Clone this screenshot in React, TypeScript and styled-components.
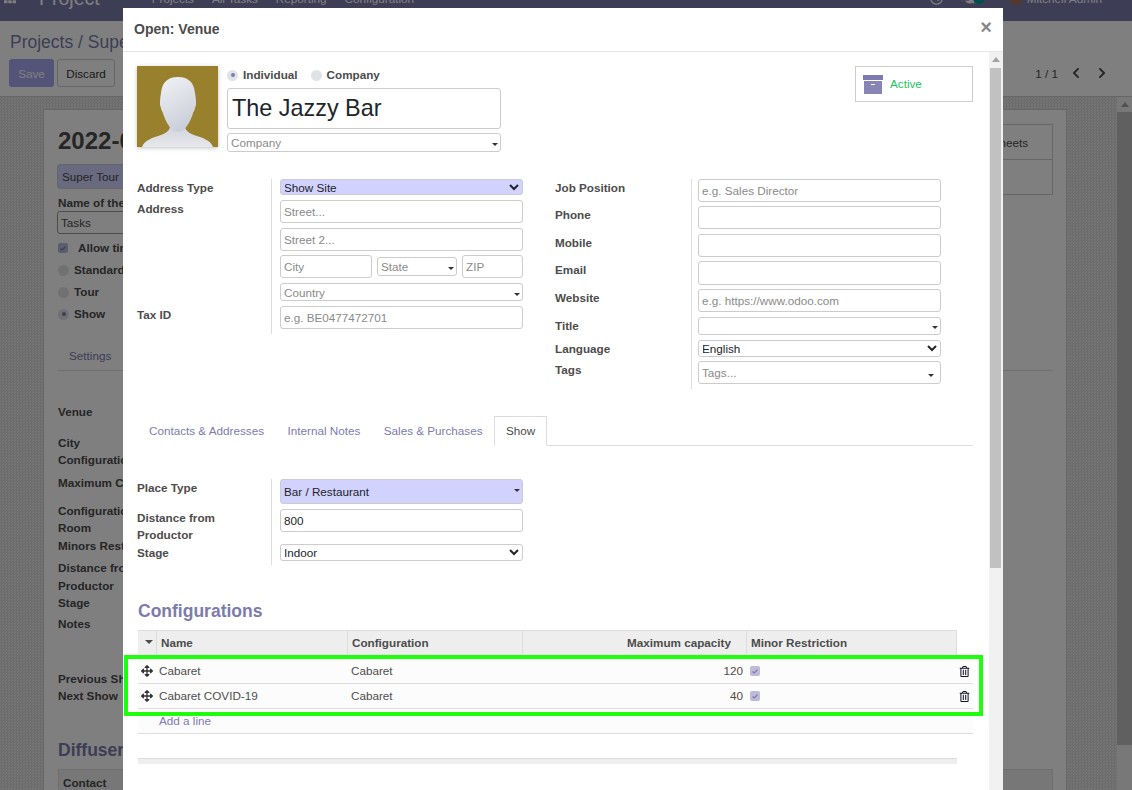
import { ReactElement } from 'react';
import styled, { createGlobalStyle } from 'styled-components';
import { FaArrowsAlt, FaChevronLeft, FaChevronRight, FaComments, FaRegClock, FaRegTrashAlt, FaTh } from 'react-icons/fa';

const GlobalStyle = createGlobalStyle`
  html, body {
    height: 100%;
    margin: 0;
    overflow: hidden;
  }
  body {
    color: #4c4c4c;
    font-family: "Liberation Sans", Arial, sans-serif;
    font-size: 11.7px;
  }
  * {
    box-sizing: border-box;
  }
`;

const Page = styled.div`
  display: flex;
  flex-direction: column;
  height: 790px;
  overflow: hidden;
  position: relative;
  width: 1132px;
`;
const Navbar = styled.div`
  background: #7c7bad;
  flex: none;
  height: 21px;
  overflow: hidden;
`;
const NavInner = styled.div`
  align-items: center;
  color: #fff;
  display: flex;
  height: 46px;
  margin-top: -25px;
  padding: 0 15px 0 4px;
`;
const AppName = styled.span`
  font-size: 19.5px;
  margin: 0 52px 0 23px;
`;
const NavItem = styled.span`
  margin-right: 18px;
`;
const NavRight = styled.div`
  align-items: center;
  display: flex;
  gap: 8px;
  margin-left: auto;
`;
const NavChat = styled(FaComments)`
  margin-left: 10px;
`;
const TealDot = styled.span`
  background: #00a09d;
  border-radius: 50%;
  height: 12px;
  margin: 0 16px 0 -10px;
  width: 12px;
`;
const UserPic = styled.span`
  background: #a5715a;
  border-radius: 50%;
  height: 14px;
  margin-right: -4px;
  width: 14px;
`;
const NavCaret = styled.span`
  border-left: 4px solid transparent;
  border-right: 4px solid transparent;
  border-top: 4px solid #fff;
  margin-left: -1px;
`;

const ControlPanel = styled.div`
  background: #fff;
  border-bottom: 1px solid #ccc;
  flex: none;
  height: 76px;
  padding: 10px 24px 0 9px;
`;
const Breadcrumb = styled.div`
  color: #7c7bad;
  font-size: 17.5px;
  line-height: 22px;
  padding-left: 1px;
`;
const PanelRow = styled.div`
  align-items: center;
  display: flex;
  height: 28px;
  justify-content: space-between;
  margin-top: 6px;
`;
const PanelButtons = styled.div`
  display: flex;
  gap: 3px;
`;
const SaveButton = styled.div`
  align-items: center;
  background: #a8a6f0;
  border-radius: 3px;
  color: #fff;
  display: flex;
  height: 28px;
  justify-content: center;
  width: 45px;
`;
const DiscardButton = styled(SaveButton)`
  background: #fff;
  border: 1px solid #ccc;
  color: #333;
  width: 58px;
`;
const Pager = styled.div`
  align-items: center;
  display: flex;
  gap: 14px;
`;
const PagerCount = styled.span`
  margin-right: -2px;
`;

const MainArea = styled.div`
  display: flex;
  flex: 1;
  min-height: 0;
`;
const SheetBackground = styled.div`
  background-color: #e2e2e2;
  background-image: repeating-conic-gradient(#d9d9d9 0 25%, #e8e8e8 0 50%);
  background-size: 3px 3px;
  flex: 1;
  min-width: 0;
  overflow: hidden;
  padding: 12px 50px 0 43px;
`;
const Sheet = styled.div`
  background: #fff;
  border: 1px solid #ccc;
  height: 760px;
  padding: 0 13px 0 14px;
`;
const SheetTop = styled.div`
  display: flex;
  justify-content: space-between;
`;
const SheetTitle = styled.div`
  color: #4c4c4c;
  font-size: 24px;
  font-weight: 700;
  line-height: 30px;
  margin-top: 16px;
`;
const TourChip = styled.div`
  align-items: center;
  background: #d2d2ff;
  border: 1px solid #ccc;
  border-radius: 3px;
  display: flex;
  height: 25px;
  margin: 8px 0 0 -1px;
  padding-left: 4px;
  width: 180px;
`;
const BgLabel = styled.div<{ $top: number }>`
  font-weight: 700;
  line-height: 14px;
  margin-top: ${(p) => p.$top}px;
`;
const BgInput = styled.div`
  align-items: center;
  border: 1px solid #999;
  border-radius: 3px;
  display: flex;
  height: 23px;
  margin: 1px 0 0 -1px;
  padding-left: 3px;
  width: 180px;
`;
const BgOption = styled(BgLabel)<{ $gap?: number }>`
  align-items: center;
  display: flex;
  gap: ${(p) => p.$gap ?? 5}px;
`;
const StatBoxes = styled.div`
  margin-top: 14px;
  width: 150px;
`;
const StatBox = styled.div`
  align-items: center;
  border: 1px solid #ccc;
  display: flex;
  height: 36px;
  justify-content: flex-end;
  margin-bottom: -1px;
  padding-right: 24px;
`;
const BgTabs = styled.div`
  border-bottom: 1px solid #ddd;
  color: #7c7bad;
  line-height: 14px;
  margin-top: 28px;
  padding: 0 0 7px 11px;
`;
const BgHeading = styled.div`
  color: #7c7bad;
  font-size: 17.5px;
  font-weight: 700;
  line-height: 20px;
  margin-top: 37px;
`;
const BgTableHead = styled.div`
  align-items: center;
  background: #eee;
  border: 1px solid #ddd;
  display: flex;
  font-weight: 700;
  height: 26px;
  margin-top: 9px;
  padding-left: 4px;
`;
const PageScrollbar = styled.div`
  background: #f1f1f1;
  flex: none;
  padding: 15px 0 0;
  position: relative;
  width: 15px;
`;
const PageScrollThumb = styled.div`
  background: #c1c1c1;
  height: 633px;
`;
const ScrollArrow = styled.span`
  border-bottom: 5px solid #a3a3a3;
  border-left: 4px solid transparent;
  border-right: 4px solid transparent;
  height: 0;
  left: 50%;
  margin-left: -4px;
  position: absolute;
  top: 5px;
  width: 0;
`;
const Backdrop = styled.div`
  background: rgba(0, 0, 0, 0.5);
  inset: 0;
  position: absolute;
`;

const Modal = styled.div`
  background: #fff;
  display: flex;
  flex-direction: column;
  height: 782px;
  left: 123px;
  position: absolute;
  top: 8px;
  width: 880px;
`;
const ModalHeader = styled.div`
  align-items: center;
  border-bottom: 1px solid #e5e5e5;
  display: flex;
  flex: none;
  height: 44px;
  justify-content: space-between;
  padding: 0 11px 2px 11px;
`;
const ModalTitle = styled.div`
  color: #4c4c4c;
  font-size: 14px;
  font-weight: 700;
`;
const CloseButton = styled.span`
  color: #888;
  font-size: 20px;
  font-weight: 700;
  line-height: 20px;
  padding-bottom: 4px;
`;
const ModalMain = styled.div`
  display: flex;
  flex: 1;
  min-height: 0;
`;
const ModalBody = styled.div`
  flex: 1;
  min-width: 0;
  overflow: hidden;
  padding: 14px 16px 0 14px;
`;
const ModalScrollbar = styled.div`
  background: #f1f1f1;
  flex: none;
  padding: 16px 2px 0 1px;
  position: relative;
  width: 14px;
`;
const ModalScrollThumb = styled.div`
  background: #c1c1c1;
  height: 500px;
`;

const PartnerTop = styled.div`
  align-items: flex-start;
  display: flex;
  height: 113px;
`;
const Avatar = styled.div`
  box-shadow: 0 1px 4px rgba(0, 0, 0, 0.25);
  flex: none;
  height: 81px;
  width: 81px;
`;
const PartnerMain = styled.div`
  margin-left: 9px;
  width: 274px;
`;
const RadioRow = styled.div`
  align-items: center;
  display: flex;
  height: 18px;
  margin-bottom: 4px;
`;
const Radio = styled.span<{ $checked?: boolean }>`
  align-items: center;
  background: #e0e2e6;
  border-radius: 50%;
  display: flex;
  flex: none;
  height: 11px;
  justify-content: center;
  width: 11px;

  &::after {
    background: #7c7bad;
    border-radius: 50%;
    content: '';
    display: ${(p) => (p.$checked ? 'block' : 'none')};
    height: 4px;
    width: 4px;
  }
`;
const RadioLabel = styled.span`
  font-weight: 700;
  margin: 0 13px 0 5px;
  padding-bottom: 2px;
`;
const TextInput = styled.input<{ $height?: number; $width?: number }>`
  background: #fff;
  border: 1px solid #ccc;
  border-radius: 3px;
  color: #212529;
  display: block;
  font-family: inherit;
  font-size: 11.7px;
  height: ${(p) => p.$height ?? 23}px;
  outline: none;
  padding: 0 3px;
  width: ${(p) => (p.$width ? `${p.$width}px` : '100%')};

  &::placeholder {
    color: #8a8a8a;
    opacity: 1;
  }
`;
const NameInput = styled(TextInput)`
  font-size: 23.4px;
  height: 41px;
  margin-bottom: 4px;
  padding: 0 4px;
`;
const ComboWrap = styled.div<{ $width?: number }>`
  flex: none;
  position: relative;
  width: ${(p) => (p.$width ? `${p.$width}px` : '100%')};
`;
const ComboCaret = styled.span<{ $right?: number; $bottom?: number }>`
  border-left: 3.5px solid transparent;
  border-right: 3.5px solid transparent;
  border-top: 3.5px solid #333;
  bottom: ${(p) => p.$bottom ?? 6}px;
  position: absolute;
  right: ${(p) => p.$right ?? 3}px;
`;
const ActiveButton = styled.div`
  align-items: center;
  border: 1px solid #ccc;
  display: flex;
  gap: 7px;
  height: 36px;
  margin-left: auto;
  padding-left: 7px;
  width: 118px;
`;
const ActiveText = styled.span`
  color: #22c55e;
  padding-bottom: 2px;
`;

const Columns = styled.div`
  align-items: flex-start;
  display: flex;
`;
const FormGrid = styled.div<{ $label: number; $pad: number; $left?: number }>`
  display: grid;
  grid-template-columns: ${(p) => p.$label}px ${(p) => 243 + p.$pad + 1}px;
  margin-left: ${(p) => p.$left ?? 0}px;
`;
const FormLabel = styled.div`
  color: #4c4c4c;
  font-weight: 700;
  line-height: 14px;
  padding-top: 2px;
`;
const WrapLabel = styled(FormLabel)`
  line-height: 17px;
  padding-top: 0;
`;
const FormCell = styled.div<{ $pad: number; $gap: number }>`
  border-left: 1px solid #ddd;
  padding-bottom: ${(p) => p.$gap}px;
  padding-left: ${(p) => p.$pad}px;
`;
const CellRow = styled.div`
  align-items: center;
  display: flex;
  gap: 5px;
  justify-content: space-between;
`;
const Stack = styled.div`
  display: flex;
  flex-direction: column;
`;
const Spaced = styled.div<{ $after: number }>`
  margin-bottom: ${(p) => p.$after}px;
`;
const NativeSelect = styled.select<{ $height: number; $required?: boolean }>`
  background: ${(p) => (p.$required ? '#d2d2ff' : '#fff')};
  border: 1px solid #ccc;
  border-radius: 3px;
  color: #212529;
  display: block;
  font-family: inherit;
  font-size: 11.7px;
  height: ${(p) => p.$height}px;
  outline: none;
  padding: 0;
  text-indent: -1px;
  width: 243px;
`;
const PlaceSelect = styled.div`
  background: #d2d2ff;
  border: 1px solid #ccc;
  border-radius: 3px;
  color: #212529;
  height: 25px;
  line-height: 24px;
  padding-left: 3px;
`;

const Tabs = styled.div`
  border-bottom: 1px solid #ddd;
  display: flex;
  height: 30px;
  margin-top: 27px;
`;
const Tab = styled.div<{ $active?: boolean }>`
  align-items: center;
  background: #fff;
  border: 1px solid ${(p) => (p.$active ? '#ddd' : 'transparent')};
  border-bottom: ${(p) => (p.$active ? '1px solid #fff' : '1px solid transparent')};
  color: ${(p) => (p.$active ? '#4c4c4c' : '#7c7bad')};
  display: flex;
  height: 30px;
  margin-right: -0.5px;
  padding: 0 11px 2px;
`;
const ShowPage = styled.div`
  margin-top: 33px;
`;
const PlaceCell = styled.div`
  align-items: center;
  display: flex;
  gap: 10px;
`;
const Heading = styled.h3`
  color: #7c7bad;
  font-size: 17.5px;
  font-weight: 700;
  line-height: 20px;
  margin: 36px 0 9px 1px;
`;

const ListWrap = styled.div`
  margin-left: 1px;
  width: 835px;
`;
const HeaderRow = styled.div`
  background: #eee;
  border-top: 1px solid #ddd;
  display: grid;
  font-weight: 700;
  grid-template-columns: 19px 191px 175px 224px 1fr;
  height: 29px;
  width: 819px;
`;
const HeaderCell = styled.div<{ $right?: boolean }>`
  align-items: center;
  border-right: 1px solid #ddd;
  display: flex;
  height: 27px;
  justify-content: ${(p) => (p.$right ? 'flex-end' : 'flex-start')};
  padding: 0 ${(p) => (p.$right ? 15 : 4)}px 5px 4px;
`;
const SortCaret = styled.span`
  border-left: 4px solid transparent;
  border-right: 4px solid transparent;
  border-top: 4px solid #4c4c4c;
  margin-left: 3px;
`;
const BodyRow = styled.div`
  align-items: center;
  background: #fcfcfc;
  border-bottom: 1px solid #ddd;
  color: #4c4c4c;
  display: grid;
  grid-template-columns: 19px 191px 175px 224px 1fr 15px;
  height: 25px;
`;
const NameCell = styled.div`
  padding: 0 0 2px 2px;
`;
const ConfigCell = styled.div`
  padding: 0 0 2px 3px;
`;
const NumberCell = styled.div`
  padding: 0 4px 2px 0;
  text-align: right;
`;
const MinorCell = styled.div`
  display: flex;
  padding-left: 3px;
`;
const HandleCell = styled.div`
  color: #333;
  display: flex;
  justify-content: center;
  padding-right: 1px;
`;
const TrashCell = styled.div`
  color: #14142b;
  display: flex;
  padding-left: 1px;
`;
const CheckBox = styled.span`
  align-items: center;
  background: #bdbbd8;
  border-radius: 2px;
  display: flex;
  flex: none;
  height: 10px;
  justify-content: center;
  width: 10px;
`;
const AddLine = styled.div`
  background: #fcfcfc;
  border-bottom: 1px solid #ddd;
  color: #7c7bad;
  height: 25px;
  line-height: 24px;
  padding-left: 21px;
`;
const ListFooter = styled.div`
  background: #eee;
  border-top: 1px solid #ddd;
  height: 6px;
  margin-top: 24px;
  width: 819px;
`;
const Highlight = styled.div`
  border: 4px solid #1eff0e;
  height: 61px;
  left: 124px;
  position: absolute;
  top: 655px;
  width: 859px;
`;

function Combo(props: {
  placeholder?: string;
  height: number;
  width?: number;
  caretRight?: number;
  caretBottom?: number;
}): ReactElement {
  return (
    <ComboWrap $width={ props.width }>
      <TextInput placeholder={ props.placeholder } $height={ props.height } />
      <ComboCaret $right={ props.caretRight } $bottom={ props.caretBottom } />
    </ComboWrap>
  );
}

function AvatarPicture(): ReactElement {
  return (
    <svg width="81" height="81" viewBox="0 0 81 81">
      <defs>
        <linearGradient id="face" x1="0.2" y1="0" x2="0.6" y2="1">
          <stop offset="0" stopColor="#eef0f3" />
          <stop offset="1" stopColor="#c9cdd7" />
        </linearGradient>
        <linearGradient id="body" x1="0" y1="0" x2="0" y2="1">
          <stop offset="0" stopColor="#d2d5dd" />
          <stop offset="1" stopColor="#e6e8ec" />
        </linearGradient>
      </defs>
      <rect width="81" height="81" fill="#98802d" />
      <path d="M5 81C7 75 14 72 24 69C29 67 32 65 33 61L48 61C49 65 52 67 57 69C67 72 74 75 76 81Z" fill="url(#body)" />
      <path d="M41 11C30 11 25 17 24 27C23 32 23 36 23 39C24 41 24 44 26 47C28 54 32 62 37 65C39 66 43 66 45 65C50 62 54 54 56 47C58 44 58 41 59 39C59 36 59 32 58 27C57 17 52 11 41 11Z" fill="url(#face)" />
    </svg>
  );
}

function ArchiveIcon(): ReactElement {
  return (
    <svg width="20" height="19" viewBox="0 0 20 19">
      <rect x="0" y="0" width="20" height="5" fill="#7c7bad" />
      <rect x="1" y="6" width="18" height="13" fill="#8785b5" />
      <rect x="8" y="9" width="4" height="1" fill="#fff" />
    </svg>
  );
}

function ExternalIcon(): ReactElement {
  return (
    <svg width="19" height="17" viewBox="0 0 19 17" fill="none" stroke="#7c7bad" strokeWidth="1.6">
      <path d="M8 3.5H3.5C2 3.5 1 4.5 1 6V13.5C1 15 2 16 3.5 16H11C12.5 16 13.5 15 13.5 13.5V10" />
      <path d="M7 11L15.5 2.5" strokeWidth="2.2" />
      <path d="M11 0.5H18.5V8Z" fill="#7c7bad" stroke="none" />
    </svg>
  );
}

function TickMark(): ReactElement {
  return (
    <svg width="6" height="5" viewBox="0 0 6 5" fill="none" stroke="#7c7bad" strokeWidth="1.2">
      <path d="M0.5 2.5L2.2 4L5.5 0.8" />
    </svg>
  );
}

function ConfigRow(props: { name: string; capacity: number }): ReactElement {
  return (
    <BodyRow>
      <HandleCell><FaArrowsAlt size={ 12 } /></HandleCell>
      <NameCell>{ props.name }</NameCell>
      <ConfigCell>Cabaret</ConfigCell>
      <NumberCell>{ props.capacity }</NumberCell>
      <MinorCell>
        <CheckBox><TickMark /></CheckBox>
      </MinorCell>
      <TrashCell><FaRegTrashAlt size={ 11 } /></TrashCell>
    </BodyRow>
  );
}

export default function App(): ReactElement {
  return (
    <Page>
      <GlobalStyle />

      <Navbar>
        <NavInner>
          <FaTh size={ 12 } />
          <AppName>Project</AppName>
          <NavItem>Projects</NavItem>
          <NavItem>All Tasks</NavItem>
          <NavItem>Reporting</NavItem>
          <NavItem>Configuration</NavItem>
          <NavRight>
            <FaRegClock size={ 13 } />
            <NavChat size={ 14 } />
            <TealDot />
            <UserPic />
            <span>Mitchell Admin</span>
            <NavCaret />
          </NavRight>
        </NavInner>
      </Navbar>

      <ControlPanel>
        <Breadcrumb>Projects / Super Tour</Breadcrumb>
        <PanelRow>
          <PanelButtons>
            <SaveButton>Save</SaveButton>
            <DiscardButton>Discard</DiscardButton>
          </PanelButtons>
          <Pager>
            <PagerCount>1 / 1</PagerCount>
            <FaChevronLeft size={ 12 } />
            <FaChevronRight size={ 12 } />
          </Pager>
        </PanelRow>
      </ControlPanel>

      <MainArea>
        <SheetBackground>
          <Sheet>
            <SheetTop>
              <div>
                <SheetTitle>2022-03</SheetTitle>
                <TourChip>Super Tour</TourChip>
                <BgLabel $top={ 7 }>Name of the</BgLabel>
                <BgInput>Tasks</BgInput>
                <BgOption $top={ 7 } $gap={ 10 }>
                  <CheckBox><TickMark /></CheckBox>
                  Allow timesheets
                </BgOption>
                <BgOption $top={ 8 }><Radio />Standard</BgOption>
                <BgOption $top={ 8 }><Radio />Tour</BgOption>
                <BgOption $top={ 8 }><Radio $checked />Show</BgOption>
              </div>
              <StatBoxes>
                <StatBox>Timesheets</StatBox>
                <StatBox />
              </StatBoxes>
            </SheetTop>
            <BgTabs>Settings</BgTabs>
            <BgLabel $top={ 34 }>Venue</BgLabel>
            <BgLabel $top={ 17 }>City</BgLabel>
            <BgLabel $top={ 3 }>Configuration</BgLabel>
            <BgLabel $top={ 9 }>Maximum Capacity</BgLabel>
            <BgLabel $top={ 14 }>Configuration</BgLabel>
            <BgLabel $top={ 3 }>Room</BgLabel>
            <BgLabel $top={ 4 }>Minors Restriction</BgLabel>
            <BgLabel $top={ 8 }>Distance from</BgLabel>
            <BgLabel $top={ 4 }>Productor</BgLabel>
            <BgLabel $top={ 3 }>Stage</BgLabel>
            <BgLabel $top={ 7 }>Notes</BgLabel>
            <BgLabel $top={ 41 }>Previous Show</BgLabel>
            <BgLabel $top={ 3 }>Next Show</BgLabel>
            <BgHeading>Diffusers</BgHeading>
            <BgTableHead>Contact</BgTableHead>
          </Sheet>
        </SheetBackground>
        <PageScrollbar>
          <ScrollArrow />
          <PageScrollThumb />
        </PageScrollbar>
      </MainArea>

      <Backdrop />

      <Modal>
        <ModalHeader>
          <ModalTitle>Open: Venue</ModalTitle>
          <CloseButton>×</CloseButton>
        </ModalHeader>
        <ModalMain>
          <ModalBody>
            <PartnerTop>
              <Avatar><AvatarPicture /></Avatar>
              <PartnerMain>
                <RadioRow>
                  <Radio $checked />
                  <RadioLabel>Individual</RadioLabel>
                  <Radio />
                  <RadioLabel>Company</RadioLabel>
                </RadioRow>
                <NameInput defaultValue="The Jazzy Bar" />
                <Combo placeholder="Company" height={ 19 } />
              </PartnerMain>
              <ActiveButton>
                <ArchiveIcon />
                <ActiveText>Active</ActiveText>
              </ActiveButton>
            </PartnerTop>

            <Columns>
              <FormGrid $label={ 134 } $pad={ 8 }>
                <FormLabel>Address Type</FormLabel>
                <FormCell $pad={ 8 } $gap={ 5 }>
                  <NativeSelect $height={ 16 } $required defaultValue="Show Site">
                    <option>Show Site</option>
                  </NativeSelect>
                </FormCell>
                <FormLabel>Address</FormLabel>
                <FormCell $pad={ 8 } $gap={ 5 }>
                  <Stack>
                    <Spaced $after={ 5 }><TextInput placeholder="Street..." /></Spaced>
                    <Spaced $after={ 4 }><TextInput placeholder="Street 2..." /></Spaced>
                    <Spaced $after={ 5 }>
                      <CellRow>
                        <TextInput placeholder="City" $width={ 92 } />
                        <Combo placeholder="State" height={ 19 } width={ 80 } />
                        <TextInput placeholder="ZIP" $width={ 61 } />
                      </CellRow>
                    </Spaced>
                    <Combo placeholder="Country" height={ 18 } caretBottom={ 5 } />
                  </Stack>
                </FormCell>
                <FormLabel>Tax ID</FormLabel>
                <FormCell $pad={ 8 } $gap={ 5 }>
                  <TextInput placeholder="e.g. BE0477472701" />
                </FormCell>
              </FormGrid>

              <FormGrid $label={ 136 } $pad={ 6 } $left={ 32 }>
                <FormLabel>Job Position</FormLabel>
                <FormCell $pad={ 6 } $gap={ 4 }><TextInput placeholder="e.g. Sales Director" /></FormCell>
                <FormLabel>Phone</FormLabel>
                <FormCell $pad={ 6 } $gap={ 5 }><TextInput /></FormCell>
                <FormLabel>Mobile</FormLabel>
                <FormCell $pad={ 6 } $gap={ 4 }><TextInput /></FormCell>
                <FormLabel>Email</FormLabel>
                <FormCell $pad={ 6 } $gap={ 4 }><TextInput $height={ 24 } /></FormCell>
                <FormLabel>Website</FormLabel>
                <FormCell $pad={ 6 } $gap={ 5 }><TextInput placeholder="e.g. https://www.odoo.com" /></FormCell>
                <FormLabel>Title</FormLabel>
                <FormCell $pad={ 6 } $gap={ 5 }><Combo height={ 18 } /></FormCell>
                <FormLabel>Language</FormLabel>
                <FormCell $pad={ 6 } $gap={ 4 }>
                  <NativeSelect $height={ 17 } defaultValue="English">
                    <option>English</option>
                  </NativeSelect>
                </FormCell>
                <FormLabel>Tags</FormLabel>
                <FormCell $pad={ 6 } $gap={ 5 }>
                  <Combo placeholder="Tags..." height={ 23 } caretRight={ 7 } caretBottom={ 7 } />
                </FormCell>
              </FormGrid>
            </Columns>

            <Tabs>
              <Tab>Contacts &amp; Addresses</Tab>
              <Tab>Internal Notes</Tab>
              <Tab>Sales &amp; Purchases</Tab>
              <Tab $active>Show</Tab>
            </Tabs>

            <ShowPage>
              <FormGrid $label={ 134 } $pad={ 8 }>
                <FormLabel>Place Type</FormLabel>
                <FormCell $pad={ 8 } $gap={ 5 }>
                  <PlaceCell>
                    <ComboWrap $width={ 243 }>
                      <PlaceSelect>Bar / Restaurant</PlaceSelect>
                      <ComboCaret $right={ 3 } $bottom={ 12 } />
                    </ComboWrap>
                    <ExternalIcon />
                  </PlaceCell>
                </FormCell>
                <WrapLabel>Distance from Productor</WrapLabel>
                <FormCell $pad={ 8 } $gap={ 12 }><TextInput defaultValue="800" /></FormCell>
                <FormLabel>Stage</FormLabel>
                <FormCell $pad={ 8 } $gap={ 4 }>
                  <NativeSelect $height={ 17 } defaultValue="Indoor">
                    <option>Indoor</option>
                  </NativeSelect>
                </FormCell>
              </FormGrid>
            </ShowPage>

            <Heading>Configurations</Heading>
            <ListWrap>
              <HeaderRow>
                <HeaderCell><SortCaret /></HeaderCell>
                <HeaderCell>Name</HeaderCell>
                <HeaderCell>Configuration</HeaderCell>
                <HeaderCell $right>Maximum capacity</HeaderCell>
                <HeaderCell>Minor Restriction</HeaderCell>
              </HeaderRow>
              <ConfigRow name="Cabaret" capacity={ 120 } />
              <ConfigRow name="Cabaret COVID-19" capacity={ 40 } />
              <AddLine>Add a line</AddLine>
              <ListFooter />
            </ListWrap>
          </ModalBody>
          <ModalScrollbar>
            <ScrollArrow />
            <ModalScrollThumb />
          </ModalScrollbar>
        </ModalMain>
      </Modal>

      <Highlight />
    </Page>
  );
}
